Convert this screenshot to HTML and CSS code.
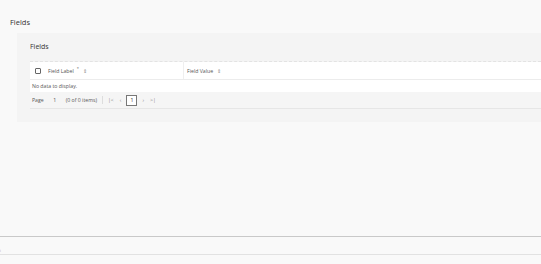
FILE: index.html
```html
<!DOCTYPE html>
<html lang="en">

<head>
    <meta charset="UTF-8">
    <title>Fields</title>
    <link rel="stylesheet" href="styles.css">
</head>

<body>
    <div class="page">
        <h1 class="page-title">Fields</h1>

        <!-- Panel -->
        <div class="panel">
            <div class="panel-header">Fields</div>

            <div class="grid">
                <div class="grid-head">
                    <div class="cell cell-check"><span class="checkbox"></span></div>
                    <div class="cell cell-label">Field Label <sup class="req">*</sup> <span class="sort">&#8661;</span></div>
                    <div class="cell cell-value">Field Value <span class="sort">&#8661;</span></div>
                </div>
                <div class="grid-empty">No data to display.</div>
                <div class="pager">
                    <span>Page</span>
                    <span class="pager-input">1</span>
                    <span>(0 of 0 items)</span>
                    <span class="pager-sep"></span>
                    <span class="pager-btn">|&lt;</span>
                    <span class="pager-btn">&#8249;</span>
                    <span class="pager-page">1</span>
                    <span class="pager-btn">&#8250;</span>
                    <span class="pager-btn">&gt;|</span>
                </div>
            </div>
        </div>
    </div>

    <div class="footer">
        <span class="footer-text">i</span>
    </div>
</body>

</html>
```

FILE: styles.css
```css
/* General */
body {
    margin: 0;
    background: #f9f9f9;
    font-family: "Open Sans", Arial, sans-serif;
    color: #333;
    height: 264px;
    overflow: hidden;
}

.page {
    height: 236px;
    border-bottom: 1px solid #c9c9c9;
}

.page-title {
    margin: 0;
    padding: 17px 10px 0;
    height: 16px;
    font-size: 7.5px;
    font-weight: normal;
    line-height: 10px;
    color: #333;
}

/* Panel */
.panel {
    margin-left: 17px;
    background: #f4f4f4;
    padding: 0 0 13px 13px;
}

.panel-header {
    height: 28px;
    line-height: 28px;
    font-size: 7px;
    color: #333;
}

.grid {
    border-top: 1px dashed #e3e3e3;
    font-size: 5.2px;
    color: #555;
}

.grid-head {
    display: flex;
    height: 17px;
    background: #fff;
    border-bottom: 1px solid #ececec;
}

.cell {
    display: flex;
    align-items: center;
    gap: 3px;
}

.cell-check {
    width: 15px;
    justify-content: center;
}

.checkbox {
    width: 4px;
    height: 4px;
    border: 1px solid #666;
    border-radius: 1px;
}

.cell-label {
    width: 135px;
    padding-left: 3px;
    border-right: 1px solid #efefef;
}

.cell-value {
    padding-left: 3px;
}

.req {
    font-size: 4px;
    margin-top: -5px;
}

.sort {
    color: #888;
    margin-left: 1px;
}

.grid-empty {
    height: 12px;
    line-height: 12px;
    background: #fff;
    padding-left: 2px;
}

/* Pager */
.pager {
    display: flex;
    align-items: center;
    gap: 4px;
    height: 16px;
    padding-left: 2px;
    background: #f5f5f5;
    border-bottom: 1px solid #e6e6e6;
}

.pager-input {
    width: 14px;
    text-align: center;
}

.pager-sep {
    width: 1px;
    height: 8px;
    background: #ddd;
    margin-left: 1px;
}

.pager-btn {
    color: #888;
    padding: 0 1px;
}

.pager-page {
    width: 9px;
    height: 9px;
    line-height: 9px;
    text-align: center;
    border: 1px solid #777;
    background: #fff;
    color: #333;
}

/* Footer */
.footer {
    height: 17px;
    border-bottom: 1px solid #e2e2e2;
    position: relative;
}

.footer-text {
    position: absolute;
    left: 0;
    bottom: 1px;
    font-size: 3px;
    color: #999;
}
```
